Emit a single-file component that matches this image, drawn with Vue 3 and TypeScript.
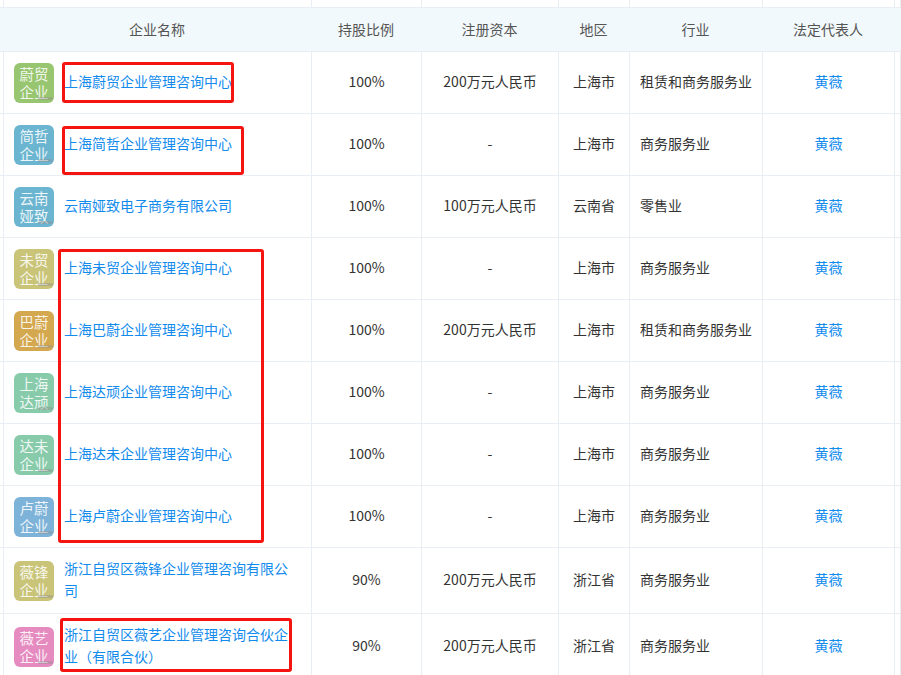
<script setup lang="ts">
interface Row {
  badge: string
  color: string
  name: string
  share: string
  capital: string
  region: string
  industry: string
}
const columns = ['企业名称', '持股比例', '注册资本', '地区', '行业', '法定代表人']
const rows: Row[] = [
  { badge: '蔚贸企业', color: '#98c56f', name: '上海蔚贸企业管理咨询中心', share: '100%', capital: '200万元人民币', region: '上海市', industry: '租赁和商务服务业' },
  { badge: '简哲企业', color: '#6cb5d0', name: '上海简哲企业管理咨询中心', share: '100%', capital: '-', region: '上海市', industry: '商务服务业' },
  { badge: '云南娅致', color: '#6cb5d0', name: '云南娅致电子商务有限公司', share: '100%', capital: '100万元人民币', region: '云南省', industry: '零售业' },
  { badge: '未贸企业', color: '#c9c478', name: '上海未贸企业管理咨询中心', share: '100%', capital: '-', region: '上海市', industry: '商务服务业' },
  { badge: '巴蔚企业', color: '#d4a84f', name: '上海巴蔚企业管理咨询中心', share: '100%', capital: '200万元人民币', region: '上海市', industry: '租赁和商务服务业' },
  { badge: '上海达顽', color: '#88cbab', name: '上海达顽企业管理咨询中心', share: '100%', capital: '-', region: '上海市', industry: '商务服务业' },
  { badge: '达未企业', color: '#88cbab', name: '上海达未企业管理咨询中心', share: '100%', capital: '-', region: '上海市', industry: '商务服务业' },
  { badge: '卢蔚企业', color: '#7db3d8', name: '上海卢蔚企业管理咨询中心', share: '100%', capital: '-', region: '上海市', industry: '商务服务业' },
  { badge: '薇锋企业', color: '#c9c478', name: '浙江自贸区薇锋企业管理咨询有限公司', share: '90%', capital: '200万元人民币', region: '浙江省', industry: '商务服务业' },
  { badge: '薇艺企业', color: '#e58bc0', name: '浙江自贸区薇艺企业管理咨询合伙企业（有限合伙）', share: '90%', capital: '200万元人民币', region: '浙江省', industry: '商务服务业' },
]
</script>

<template>
  <div class="page">
    <table class="table">
      <colgroup>
        <col class="c-gutter" />
        <col class="c-name" />
        <col class="c-share" />
        <col class="c-capital" />
        <col class="c-region" />
        <col class="c-industry" />
        <col class="c-legal" />
        <col />
      </colgroup>
      <thead>
        <tr class="cut-row">
          <td v-for="n in 8" :key="n"></td>
        </tr>
        <tr class="head-row">
          <th></th>
          <th v-for="c in columns" :key="c">{{ c }}</th>
          <th></th>
        </tr>
      </thead>
      <tbody>
        <tr v-for="r in rows" :key="r.name">
          <td></td>
          <td class="name-cell">
            <div class="company">
              <div class="badge" :style="{ backgroundColor: r.color }">
                <span class="badge-text">{{ r.badge }}</span>
                <i class="mark"></i>
              </div>
              <a class="link name">{{ r.name }}</a>
            </div>
          </td>
          <td>{{ r.share }}</td>
          <td>{{ r.capital }}</td>
          <td>{{ r.region }}</td>
          <td class="industry">{{ r.industry }}</td>
          <td><a class="link">黄薇</a></td>
          <td></td>
        </tr>
      </tbody>
    </table>
    <div class="mark-box box-a"></div>
    <div class="mark-box box-b"></div>
    <div class="mark-box box-c"></div>
    <div class="mark-box box-d"></div>
  </div>
</template>

<style>
html, body { margin: 0; background: #fff; }
</style>

<style scoped>
.page {
  position: relative;
  width: 901px;
  height: 675px;
  overflow: hidden;
  background: #fff;
  font-family: "Noto Sans CJK SC", "Liberation Sans", sans-serif;
  font-size: 14px;
  color: #333;
}
.table {
  width: 901px;
  table-layout: fixed;
  border-collapse: separate;
  border-spacing: 0;
}
.c-gutter { width: 4px; }
.c-name { width: 308px; }
.c-share { width: 110px; }
.c-capital { width: 137px; }
.c-region { width: 71px; }
.c-industry { width: 133px; }
.c-legal { width: 132px; }
td, th {
  box-sizing: border-box;
  padding: 0;
  border-right: 1px solid #e9eef4;
  border-bottom: 1px solid #e9eef4;
  text-align: center;
  font-weight: 400;
  line-height: 22px;
}
tbody td { height: 62px; padding-bottom: 4px; }
.cut-row td { height: 8px; padding: 0; line-height: 0; }
.head-row th {
  height: 44px;
  padding: 0 2px 2px 0;
  background: #f2f9fc;
  border-right: none;
  color: #555;
}
tbody td.name-cell { padding: 11px 21px 10px 10px; text-align: left; }
.company { display: flex; align-items: center; gap: 10px; }
.name { position: relative; top: -2px; flex: 1; min-width: 0; }
.badge {
  position: relative;
  flex: none;
  display: flex;
  align-items: center;
  justify-content: center;
  width: 40px;
  height: 40px;
  border-radius: 6px;
  overflow: hidden;
  color: rgba(255, 255, 255, 0.88);
  font-size: 14.5px;
  line-height: 18px;
}
.badge-text { display: block; width: 30px; text-align: center; }
.mark {
  position: absolute;
  right: 1px;
  bottom: 3px;
  width: 15px;
  height: 3px;
  border-radius: 2px;
  background: rgba(140, 140, 140, 0.4);
}
.link { color: #128bed; }
tbody td.industry { padding-left: 10px; text-align: left; }
.mark-box {
  position: absolute;
  box-sizing: border-box;
  border: 3px solid #f5140f;
  border-radius: 3px;
}
.box-a { left: 62px; top: 62px; width: 172px; height: 41px; }
.box-b { left: 62px; top: 126px; width: 182px; height: 49px; }
.box-c { left: 58px; top: 249px; width: 206px; height: 294px; }
.box-d { left: 60px; top: 618px; width: 232px; height: 54px; }
</style>
